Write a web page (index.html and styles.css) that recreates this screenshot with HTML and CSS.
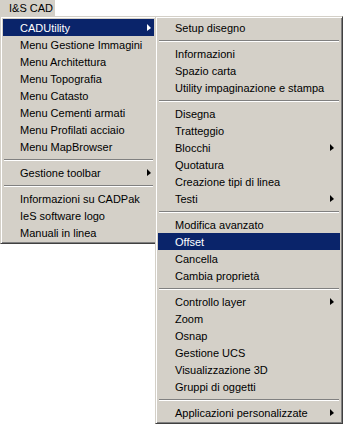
FILE: index.html
```html
<!DOCTYPE html>
<html lang="it">
<head>
  <meta charset="UTF-8" />
  <title>I&amp;S CAD</title>
  <link rel="stylesheet" href="styles.css">
</head>
<body>
  <div class="menubar">
    <span class="menubar-item">I&amp;S CAD</span>
  </div>

  <div class="menus">
    <!-- Main menu -->
    <ul class="menu menu-main">
      <li class="item active has-sub">CADUtility<span class="arrow"></span></li>
      <li class="item">Menu Gestione Immagini</li>
      <li class="item">Menu Architettura</li>
      <li class="item">Menu Topografia</li>
      <li class="item">Menu Catasto</li>
      <li class="item">Menu Cementi armati</li>
      <li class="item">Menu Profilati acciaio</li>
      <li class="item">Menu MapBrowser</li>
      <li class="sep"></li>
      <li class="item has-sub">Gestione toolbar<span class="arrow"></span></li>
      <li class="sep"></li>
      <li class="item">Informazioni su CADPak</li>
      <li class="item">IeS software logo</li>
      <li class="item">Manuali in linea</li>
    </ul>

    <!-- CADUtility submenu -->
    <ul class="menu menu-sub">
      <li class="item">Setup disegno</li>
      <li class="sep"></li>
      <li class="item">Informazioni</li>
      <li class="item">Spazio carta</li>
      <li class="item">Utility impaginazione e stampa</li>
      <li class="sep"></li>
      <li class="item">Disegna</li>
      <li class="item">Tratteggio</li>
      <li class="item has-sub">Blocchi<span class="arrow"></span></li>
      <li class="item">Quotatura</li>
      <li class="item">Creazione tipi di linea</li>
      <li class="item has-sub">Testi<span class="arrow"></span></li>
      <li class="sep"></li>
      <li class="item">Modifica avanzato</li>
      <li class="item active">Offset</li>
      <li class="item">Cancella</li>
      <li class="item">Cambia proprietà</li>
      <li class="sep"></li>
      <li class="item has-sub">Controllo layer<span class="arrow"></span></li>
      <li class="item">Zoom</li>
      <li class="item">Osnap</li>
      <li class="item">Gestione UCS</li>
      <li class="item">Visualizzazione 3D</li>
      <li class="item">Gruppi di oggetti</li>
      <li class="sep"></li>
      <li class="item has-sub">Applicazioni personalizzate<span class="arrow"></span></li>
    </ul>
  </div>
</body>
</html>
```

FILE: styles.css
```css
* {
  margin: 0;
  padding: 0;
  box-sizing: border-box;
}

body {
  background: #fff;
  color: #000;
  font-family: 'Liberation Sans', Arial, sans-serif;
  font-size: 11px;
}

.menubar {
  display: flex;
  height: 16px;
}

.menubar-item {
  background: #d4d0c8;
  width: 55px;
  line-height: 16px;
  padding-left: 9px;
}

.menus {
  display: flex;
  align-items: flex-start;
}

.menu {
  list-style: none;
  background: #d4d0c8;
  border: 1px solid;
  border-color: #d4d0c8 #404040 #404040 #d4d0c8;
  box-shadow: inset 1px 1px 0 #fff, inset -1px -1px 0 #808080;
  padding: 2px;
}

.menu-main {
  width: 157px;
  flex-shrink: 0;
}

/* submenu overlaps the right border of the main menu */
.menu-sub {
  width: 188px;
  flex-shrink: 0;
  margin-left: -2px;
}

.item {
  display: flex;
  align-items: center;
  justify-content: space-between;
  height: 17px;
  padding-left: 17px;
  white-space: nowrap;
}

.item.active {
  background: #0a246a;
  color: #fff;
}

.menu-main .item {
  padding-right: 3px;
}

.menu-sub .item {
  padding-right: 6px;
}

.arrow {
  width: 0;
  height: 0;
  border-top: 4px solid transparent;
  border-bottom: 3px solid transparent;
  border-left: 4px solid #000;
}

.item.active .arrow {
  border-left-color: #fff;
}

.sep {
  height: 9px;
  margin: 0 1px;
  padding-top: 4px;
}

.sep::before {
  content: "";
  display: block;
  height: 1px;
  background: #808080;
  border-bottom: 1px solid #fff;
  box-sizing: content-box;
}
```
